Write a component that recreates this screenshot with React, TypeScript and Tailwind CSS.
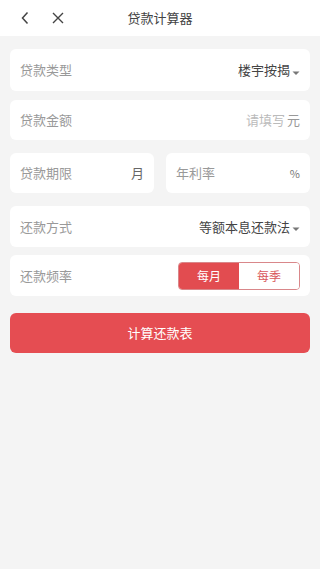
import { useState } from "react";

const font = { fontFamily: '"Noto Sans CJK SC", "Noto Sans", sans-serif' };

function Caret() {
  return (
    <svg width="8" height="5" viewBox="0 0 8 5" className="ml-0.5 mt-1.5">
      <path d="M0.5 0.5 L4 4 L7.5 0.5 Z" fill="#777" />
    </svg>
  );
}

export default function App() {
  const [freq, setFreq] = useState<"month" | "season">("month");

  return (
    <div className="min-h-[569px] w-[320px] bg-[#f4f4f4] text-[13px]" style={font}>
      <header className="relative flex h-9 items-center bg-white">
        <button className="ml-[13px] flex h-6 w-6 items-center justify-center">
          <svg width="10" height="14" viewBox="0 0 10 14">
            <path d="M7.5 1.5 L2.5 7 L7.5 12.5" fill="none" stroke="#444" strokeWidth="1.5" />
          </svg>
        </button>
        <button className="ml-[9px] flex h-6 w-6 items-center justify-center">
          <svg width="14" height="14" viewBox="0 0 14 14">
            <path d="M2 2 L12 12 M12 2 L2 12" fill="none" stroke="#444" strokeWidth="1.4" />
          </svg>
        </button>
        <div className="absolute left-1/2 -translate-x-1/2 text-[13px] text-[#444]">贷款计算器</div>
      </header>

      <main className="flex flex-col px-[10px] pt-[13px]">
        <div className="flex h-[42px] items-center justify-between rounded-md bg-white px-[10px]">
          <span className="text-[#999]">贷款类型</span>
          <span className="flex items-center text-[#444]">
            楼宇按揭
            <Caret />
          </span>
        </div>

        <div className="mt-[9px] flex h-[40px] items-center justify-between rounded-md bg-white px-[10px]">
          <span className="text-[#999]">贷款金额</span>
          <span className="text-[#bbb]">
            请填写<span className="ml-0.5 text-[#999]">元</span>
          </span>
        </div>

        <div className="mt-[13px] flex gap-3">
          <div className="flex h-[40px] flex-1 items-center justify-between rounded-md bg-white px-[10px]">
            <span className="text-[#999]">贷款期限</span>
            <span className="text-[#666]">月</span>
          </div>
          <div className="flex h-[40px] flex-1 items-center justify-between rounded-md bg-white px-[10px]">
            <span className="text-[#999]">年利率</span>
            <span className="text-[11px] text-[#777]">%</span>
          </div>
        </div>

        <div className="mt-[13px] flex h-[41px] items-center justify-between rounded-md bg-white px-[10px]">
          <span className="text-[#999]">还款方式</span>
          <span className="flex items-center text-[#444]">
            等额本息还款法
            <Caret />
          </span>
        </div>

        <div className="mt-[8px] flex h-[41px] items-center justify-between rounded-md bg-white pl-[10px] pr-[10px]">
          <span className="text-[#999]">还款频率</span>
          <div className="flex h-[28px] w-[122px] overflow-hidden rounded-[4px] border border-[#d9878a]">
            <button
              onClick={() => setFreq("month")}
              className={
                freq === "month"
                  ? "flex-1 bg-[#e24c50] text-[12px] text-white"
                  : "flex-1 bg-white text-[12px] text-[#d9585c]"
              }
            >
              每月
            </button>
            <button
              onClick={() => setFreq("season")}
              className={
                freq === "season"
                  ? "flex-1 bg-[#e24c50] text-[12px] text-white"
                  : "flex-1 bg-white text-[12px] text-[#d9585c]"
              }
            >
              每季
            </button>
          </div>
        </div>

        <button className="mt-[17px] h-[40px] rounded-md bg-[#e54d52] text-[13px] text-white">
          计算还款表
        </button>
      </main>
    </div>
  );
}
